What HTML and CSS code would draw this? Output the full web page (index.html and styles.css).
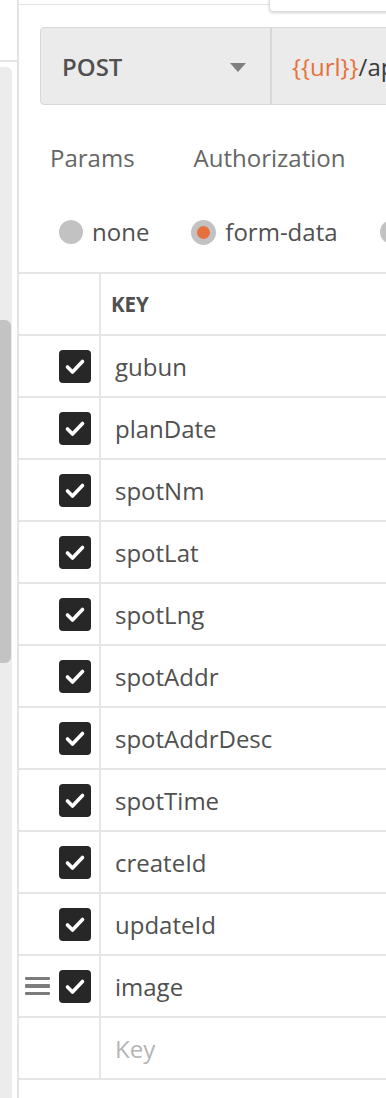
FILE: index.html
```html
<!DOCTYPE html>
<html lang="en">
  <head>
    <meta charset="utf-8" />
    <meta name="viewport" content="width=device-width, initial-scale=1.0" />
    <title>Request</title>
    <link rel="stylesheet" href="styles.css">
  </head>
  <body>
    <div class="app">
      <!-- left sidebar, only the scroll bar is visible here -->
      <aside class="sidebar">
        <div class="sidebar-top"></div>
        <div class="scroll-track">
          <div class="scroll-thumb"></div>
        </div>
      </aside>

      <main class="panel">
        <div class="topbar">
          <div class="popup"></div>
        </div>

        <div class="request">
          <div class="method">
            <span>POST</span>
            <span class="caret"></span>
          </div>
          <div class="url"><span class="var">{{url}}</span>/api/plan/spot</div>
        </div>

        <nav class="tabs">
          <a href="#">Params</a>
          <a href="#">Authorization</a>
          <a href="#">Headers</a>
        </nav>

        <div class="body-types">
          <label class="radio"><span class="dot"></span>none</label>
          <label class="radio selected"><span class="dot"></span>form-data</label>
          <label class="radio"><span class="dot"></span>x-www-form-urlencoded</label>
        </div>

        <div class="params">
          <div class="row head">
            <div class="cell-check"></div>
            <div class="cell-key">KEY</div>
          </div>
          <div class="row">
            <div class="cell-check"><span class="box"><svg viewBox="0 0 32 32"><path d="M8.5 16.5 L13.5 21.5 L23.5 11"/></svg></span></div>
            <div class="cell-key">gubun</div>
          </div>
          <div class="row">
            <div class="cell-check"><span class="box"><svg viewBox="0 0 32 32"><path d="M8.5 16.5 L13.5 21.5 L23.5 11"/></svg></span></div>
            <div class="cell-key">planDate</div>
          </div>
          <div class="row">
            <div class="cell-check"><span class="box"><svg viewBox="0 0 32 32"><path d="M8.5 16.5 L13.5 21.5 L23.5 11"/></svg></span></div>
            <div class="cell-key">spotNm</div>
          </div>
          <div class="row">
            <div class="cell-check"><span class="box"><svg viewBox="0 0 32 32"><path d="M8.5 16.5 L13.5 21.5 L23.5 11"/></svg></span></div>
            <div class="cell-key">spotLat</div>
          </div>
          <div class="row">
            <div class="cell-check"><span class="box"><svg viewBox="0 0 32 32"><path d="M8.5 16.5 L13.5 21.5 L23.5 11"/></svg></span></div>
            <div class="cell-key">spotLng</div>
          </div>
          <div class="row">
            <div class="cell-check"><span class="box"><svg viewBox="0 0 32 32"><path d="M8.5 16.5 L13.5 21.5 L23.5 11"/></svg></span></div>
            <div class="cell-key">spotAddr</div>
          </div>
          <div class="row">
            <div class="cell-check"><span class="box"><svg viewBox="0 0 32 32"><path d="M8.5 16.5 L13.5 21.5 L23.5 11"/></svg></span></div>
            <div class="cell-key">spotAddrDesc</div>
          </div>
          <div class="row">
            <div class="cell-check"><span class="box"><svg viewBox="0 0 32 32"><path d="M8.5 16.5 L13.5 21.5 L23.5 11"/></svg></span></div>
            <div class="cell-key">spotTime</div>
          </div>
          <div class="row">
            <div class="cell-check"><span class="box"><svg viewBox="0 0 32 32"><path d="M8.5 16.5 L13.5 21.5 L23.5 11"/></svg></span></div>
            <div class="cell-key">createId</div>
          </div>
          <div class="row">
            <div class="cell-check"><span class="box"><svg viewBox="0 0 32 32"><path d="M8.5 16.5 L13.5 21.5 L23.5 11"/></svg></span></div>
            <div class="cell-key">updateId</div>
          </div>
          <div class="row">
            <div class="cell-check">
              <span class="handle"><i></i><i></i><i></i></span>
              <span class="box"><svg viewBox="0 0 32 32"><path d="M8.5 16.5 L13.5 21.5 L23.5 11"/></svg></span>
            </div>
            <div class="cell-key">image</div>
          </div>
          <div class="row">
            <div class="cell-check"></div>
            <div class="cell-key placeholder">Key</div>
          </div>
        </div>
      </main>
    </div>
  </body>
</html>
```

FILE: styles.css
```css
body {
  margin: 0;
  font-family: "Open Sans", "Liberation Sans", sans-serif;
  color: #505050;
  background: #fff;
  overflow: hidden;
}

.app {
  display: flex;
  height: 1098px;
}

/* sidebar */
.sidebar {
  width: 17px;
  flex-shrink: 0;
  display: flex;
  flex-direction: column;
  border-right: 2px solid #e4e4e4;
}

.sidebar-top {
  height: 60px;
  border-bottom: 2px solid #e4e4e4;
}

.scroll-track {
  flex: 1;
  width: 12px;
  margin-top: 5px;
  background-color: #ececec;
  border-radius: 0 6px 0 0;
}

.scroll-thumb {
  width: 11px;
  height: 343px;
  margin-top: 253px;
  background-color: #c3c3c3;
  border-radius: 0 6px 6px 0;
}

/* main panel */
.panel {
  flex: 1;
  min-width: 0;
  overflow: hidden;
}

.topbar {
  position: relative;
  height: 4px;
  border-bottom: 1px solid #e2e2e2;
}

.popup {
  position: absolute;
  left: 250px;
  top: -6px;
  width: 140px;
  height: 16px;
  background: #fff;
  border: 1px solid #dcdcdc;
  border-radius: 4px;
  box-shadow: 0 1px 3px rgba(0, 0, 0, 0.18);
}

.request {
  display: flex;
  width: 420px;
  height: 78px;
  margin: 22px 0 0 21px;
  box-sizing: border-box;
  background-color: #ebebeb;
  border: 1px solid #d8d8d8;
  border-radius: 4px;
  font-size: 24px;
}

.method {
  width: 231px;
  flex-shrink: 0;
  display: flex;
  align-items: center;
  justify-content: space-between;
  padding: 0 24px 0 21px;
  box-sizing: border-box;
  font-weight: 600;
  border-right: 2px solid #d8d8d8;
}

.caret {
  width: 0;
  height: 0;
  border-left: 8px solid transparent;
  border-right: 8px solid transparent;
  border-top: 9px solid #7f7f7f;
  margin-top: 2px;
}

.url {
  display: flex;
  align-items: center;
  padding-left: 20px;
  white-space: nowrap;
  color: #3a3a3a;
}

.var {
  color: #e8703a;
}

/* tabs */
.tabs {
  display: flex;
  gap: 59px;
  margin: 37px 0 0 31px;
  line-height: 32px;
  font-size: 24px;
  white-space: nowrap;
}

.tabs a {
  color: #666;
  text-decoration: none;
}

/* body type radios */
.body-types {
  display: flex;
  gap: 42px;
  margin: 42px 0 0 40px;
  line-height: 32px;
  font-size: 24px;
  white-space: nowrap;
}

.radio {
  display: flex;
  align-items: center;
  gap: 9px;
}

.dot {
  width: 24px;
  height: 24px;
  border-radius: 50%;
  background-color: #c2c2c2;
  box-sizing: border-box;
}

.radio.selected .dot {
  width: 25px;
  height: 25px;
  background-color: #e8703f;
  border: 6px solid #c2c2c2;
}

/* params table */
.params {
  margin-top: 24px;
  border-top: 2px solid #e6e6e6;
}

.row {
  display: flex;
  height: 60px;
  border-bottom: 2px solid #e6e6e6;
}

.cell-check {
  width: 82px;
  flex-shrink: 0;
  display: flex;
  align-items: center;
  justify-content: flex-end;
  gap: 9px;
  padding-right: 8px;
  box-sizing: border-box;
  border-right: 2px solid #e6e6e6;
}

.cell-key {
  display: flex;
  align-items: center;
  padding-left: 14px;
  font-size: 24px;
  white-space: nowrap;
}

.head .cell-key {
  padding-left: 10px;
  font-size: 20.5px;
  font-weight: 700;
}

.placeholder {
  color: #b5b5b5;
}

.box {
  width: 32px;
  height: 33px;
  border-radius: 4px;
  background-color: #272727;
}

.box svg {
  display: block;
  width: 32px;
  height: 33px;
  fill: none;
  stroke: #fff;
  stroke-width: 3.6;
  stroke-linecap: round;
  stroke-linejoin: round;
}

.handle {
  display: flex;
  flex-direction: column;
  gap: 4px;
  width: 25px;
}

.handle i {
  height: 3.3px;
  background-color: #7c7c7c;
  border-radius: 1px;
}
```
